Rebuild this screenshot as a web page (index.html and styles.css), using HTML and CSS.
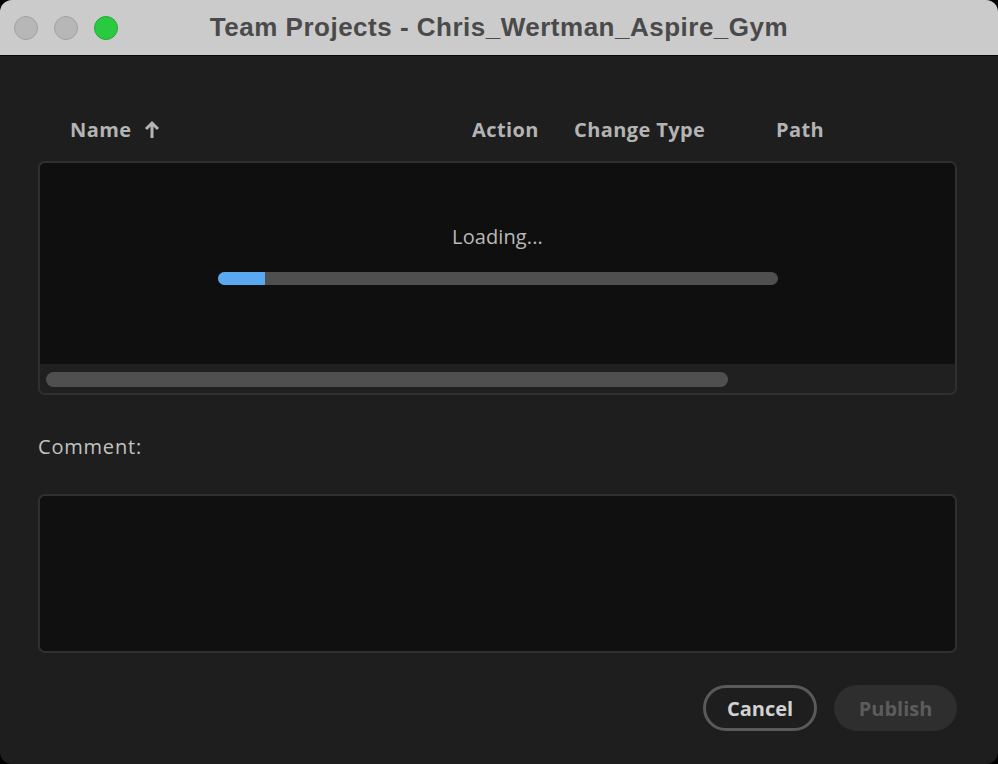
FILE: index.html
```html
<!DOCTYPE html>
<html lang="en">
<head>
    <meta charset="UTF-8">
    <title>Team Projects</title>
    <link rel="stylesheet" href="styles.css">
</head>
<body>
<div class="window">
    <div class="titlebar">
        <div class="lights">
            <span class="light"></span>
            <span class="light"></span>
            <span class="light green"></span>
        </div>
        <div class="title">Team Projects - Chris_Wertman_Aspire_Gym</div>
    </div>
    <div class="content">
        <div class="columns">
            <div class="col">Name
                <svg class="sort" width="16" height="20" viewBox="0 0 16 20">
                    <path d="M8 18V3M2 9l6-6 6 6" fill="none" stroke="#b4b4b4" stroke-width="3"/>
                </svg>
            </div>
            <div class="col">Action</div>
            <div class="col">Change Type</div>
            <div class="col">Path</div>
        </div>
        <div class="table">
            <div class="table-body">
                <div class="loading">Loading...</div>
                <div class="progress"><div class="progress-fill" style="width: 8.4%"></div></div>
            </div>
            <div class="hscroll"><div class="thumb"></div></div>
        </div>
        <div class="label">Comment:</div>
        <div class="comment"></div>
        <div class="buttons">
            <button class="btn cancel">Cancel</button>
            <button class="btn publish" disabled>Publish</button>
        </div>
    </div>
</div>
</body>
</html>
```

FILE: styles.css
```css
html, body {
    margin: 0;
    height: 100%;
    background: #000;
}
body {
    font-family: "Open Sans", "Liberation Sans", sans-serif;
}
.window {
    height: 764px;
    background: #1e1e1e;
    border-radius: 12px;
    overflow: hidden;
    display: flex;
    flex-direction: column;
}
.titlebar {
    height: 55px;
    background: #cbcbcb;
    border-bottom: 1px solid #0a0a0a;
    display: flex;
    align-items: center;
    position: relative;
}
.lights {
    display: flex;
    gap: 16px;
    padding-left: 14px;
}
.light {
    width: 22px;
    height: 22px;
    border-radius: 50%;
    background: #b7b7b7;
    border: 1px solid #a3a3a3;
}
.light.green {
    background: #2ac940;
    border-color: #22a935;
}
.title {
    position: absolute;
    left: 0;
    right: 0;
    text-align: center;
    font-family: "Liberation Sans", sans-serif;
    font-weight: bold;
    font-size: 26px;
    letter-spacing: 0.5px;
    color: #4a4a4a;
}
.content {
    padding: 62px 41px 0 38px;
}
.columns {
    display: grid;
    grid-template-columns: 402px 102px 202px 1fr;
    padding-left: 32px;
    height: 24px;
    line-height: 24px;
    font-size: 20px;
    font-weight: bold;
    color: #b4b4b4;
    letter-spacing: 0.4px;
}
.col {
    display: flex;
    align-items: center;
}
.sort {
    margin-left: 13px;
}
.table {
    margin-top: 19px;
    border: 2px solid #303030;
    border-radius: 7px;
    overflow: hidden;
}
.table-body {
    height: 201px;
    background: #0f0f0f;
    display: flex;
    flex-direction: column;
    align-items: center;
}
.loading {
    margin-top: 62px;
    font-size: 20px;
    line-height: 24px;
    color: #b9b9b9;
    letter-spacing: 0.1px;
}
.progress {
    margin-top: 23px;
    width: 560px;
    height: 13px;
    border-radius: 7px;
    background: #4f4f4f;
    overflow: hidden;
}
.progress-fill {
    height: 100%;
    background: #5ba8f2;
}
.hscroll {
    height: 29px;
    background: #202020;
    padding: 8px 0 0 6px;
    box-sizing: border-box;
}
.thumb {
    width: 682px;
    height: 15px;
    border-radius: 8px;
    background: #4f4f4f;
}
.label {
    margin-top: 40px;
    font-size: 20px;
    line-height: 24px;
    color: #c2c2c2;
    letter-spacing: 0.8px;
}
.comment {
    margin-top: 35px;
    height: 155px;
    background: #101010;
    border: 2px solid #303030;
    border-radius: 7px;
}
.buttons {
    margin-top: 32px;
    display: flex;
    justify-content: flex-end;
    gap: 17px;
}
.btn {
    height: 46px;
    border-radius: 23px;
    font-family: "Open Sans", "Liberation Sans", sans-serif;
    font-size: 20px;
    font-weight: bold;
    letter-spacing: 0;
    box-sizing: border-box;
}
.cancel {
    width: 114px;
    background: #1e1e1e;
    border: 3px solid #5a5a5a;
    color: #d2d2d2;
}
.publish {
    width: 123px;
    background: #2e2e2e;
    border: none;
    color: #5c5c5c;
}
```
